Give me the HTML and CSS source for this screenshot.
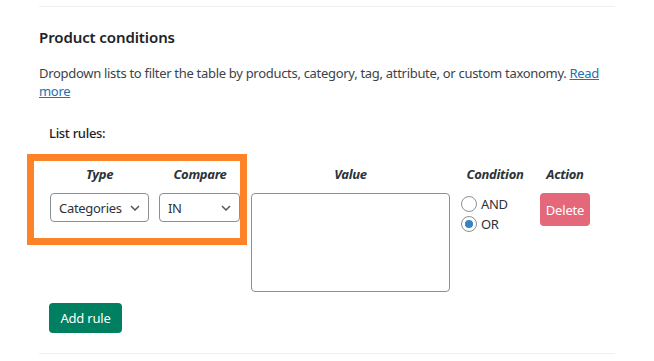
FILE: index.html
```html
<!DOCTYPE html>
<html>
<head>
<meta charset="utf-8">
<link rel="stylesheet" href="styles.css">
</head>
<body>
<div class="section">
  <h2 class="title">Product conditions</h2>
  <p class="desc">Dropdown lists to filter the table by products, category, tag, attribute, or custom taxonomy. <a href="#">Read more</a></p>
  <div class="rules">
    <div class="rules-label">List rules:</div>
    <div class="grid">
      <div class="th">Type</div>
      <div class="th">Compare</div>
      <div class="th">Value</div>
      <div class="th">Condition</div>
      <div class="th">Action</div>

      <div class="select sel-type"><span>Categories</span><svg class="chev" width="10" height="6" viewBox="0 0 10 6"><path d="M1 1l4 4 4-4" fill="none" stroke="#50575e" stroke-width="1.5"/></svg></div>
      <div class="select sel-cmp"><span>IN</span><svg class="chev" width="10" height="6" viewBox="0 0 10 6"><path d="M1 1l4 4 4-4" fill="none" stroke="#50575e" stroke-width="1.5"/></svg></div>
      <div class="textarea"></div>
      <div class="conds">
        <label class="radio"><span class="circle"></span>AND</label>
        <label class="radio"><span class="circle on"></span>OR</label>
      </div>
      <div><button class="btn-delete">Delete</button></div>

      <div class="highlight"></div>
    </div>
    <button class="btn-add">Add rule</button>
  </div>
</div>
</body>
</html>
```

FILE: styles.css
```css
* { box-sizing: border-box; }
body {
  margin: 0;
  padding-top: 6px;
  background: #fff;
  font-family: "Noto Sans", "Open Sans", sans-serif;
  color: #3c434a;
  letter-spacing: -0.3px;
}
.section {
  margin-left: 39px;
  width: 576px;
  border-top: 1px solid #f0f0f1;
  border-bottom: 1px solid #f0f0f1;
  padding-top: 20px;
  padding-bottom: 20px;
}
.title {
  margin: 0;
  font-size: 15px;
  line-height: 20px;
  font-weight: 600;
  letter-spacing: -0.1px;
  color: #1d2327;
}
.desc {
  margin: 17px 0 0;
  font-size: 13px;
  line-height: 18px;
  color: #3c434a;
}
.desc a { color: #2271b1; text-decoration: underline; }
.rules { padding-left: 11px; margin-top: 24px; }
.rules-label {
  font-size: 13px;
  line-height: 18px;
  color: #1d2327;
  font-weight: 500;
  margin-left: -1px;
}
.grid {
  position: relative;
  margin-top: 23px;
  display: grid;
  grid-template-columns: 99px 80px 199px 68px 50px;
  column-gap: 11px;
  row-gap: 10px;
  align-items: start;
}
.th {
  font-size: 13px;
  line-height: 18px;
  font-weight: 700;
  font-style: italic;
  text-align: center;
  color: #2c3338;
}
.select {
  height: 29px;
  border: 1px solid #8c8f94;
  border-radius: 4px;
  display: flex;
  align-items: center;
  justify-content: space-between;
  padding: 0 8px 0 8px;
  font-size: 13px;
  color: #2c3338;
}
.sel-cmp { margin-left: -1px; }
.chev { flex: none; }
.textarea {
  height: 99px;
  border: 1px solid #8c8f94;
  border-radius: 4px;
}
.conds { display: flex; flex-direction: column; gap: 2px; padding-top: 2px; }
.radio {
  display: flex;
  align-items: center;
  gap: 4px;
  font-size: 13px;
  line-height: 18px;
  color: #2c3338;
}
.circle {
  width: 16px;
  height: 16px;
  border: 1px solid #8c8f94;
  border-radius: 50%;
  display: flex;
  align-items: center;
  justify-content: center;
}
.circle.on::after {
  content: "";
  width: 8px;
  height: 8px;
  border-radius: 50%;
  background: #3582c4;
}
.btn-delete {
  width: 50px;
  height: 33px;
  border: 0;
  border-radius: 4px;
  background: #e5677a;
  color: #fff;
  font-family: inherit;
  font-size: 13px;
  letter-spacing: -0.2px;
  padding: 0;
}
.highlight {
  position: absolute;
  left: -23px;
  top: -11px;
  width: 220px;
  height: 91px;
  border: 7px solid #fe8227;
  pointer-events: none;
}
.btn-add {
  margin-top: 11px;
  margin-left: -1px;
  width: 73px;
  height: 30px;
  border: 0;
  border-radius: 4px;
  background: #008060;
  color: #fff;
  font-family: inherit;
  font-size: 13px;
  letter-spacing: -0.2px;
  padding: 0;
}
```
